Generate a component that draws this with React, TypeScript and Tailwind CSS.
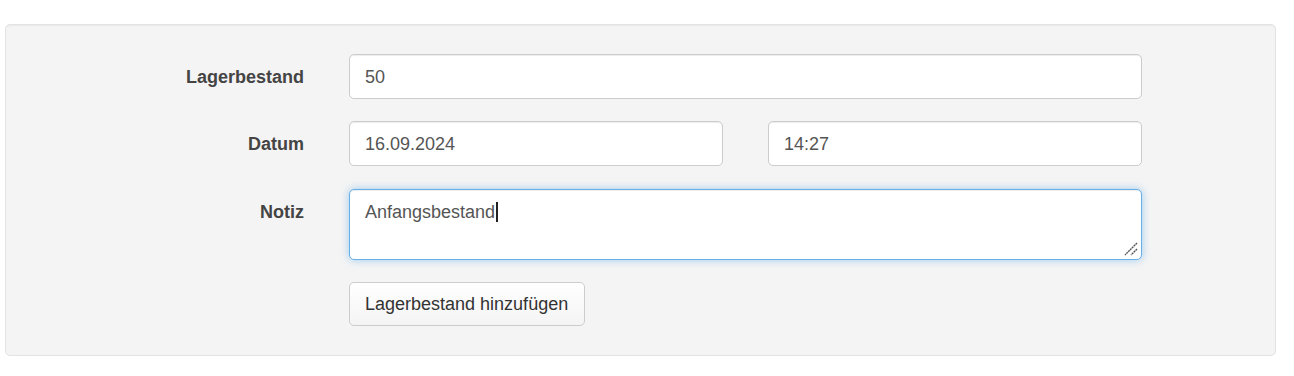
import React from 'react'

const font = { fontFamily: '"Liberation Sans", Arial, sans-serif' }

function Label({ children }: { children: React.ReactNode }) {
  return (
    <label className="w-[298px] shrink-0 text-right pt-[11px] text-[18px] leading-6 font-bold text-[#444]">
      {children}
    </label>
  )
}

function Input({ value, className = '' }: { value: string; className?: string }) {
  return (
    <div
      className={`h-[45px] rounded-[5px] border border-[#ccc] bg-white px-[15px] py-[10px] text-[18px] leading-6 text-[#555] shadow-[inset_0_1px_1px_rgba(0,0,0,0.075)] ${className}`}
    >
      {value}
    </div>
  )
}

export default function App() {
  return (
    <div className="min-h-[376px] bg-white pt-[24px]" style={font}>
      <div className="ml-[5px] w-[1271px] rounded-[5px] border border-[#e3e3e3] bg-[#f4f4f4] pt-[29px] pb-[29px] shadow-[inset_0_1px_1px_rgba(0,0,0,0.05)]">
        {/* Lagerbestand */}
        <div className="flex items-start">
          <Label>Lagerbestand</Label>
          <div className="ml-[45px] w-[793px]">
            <Input value="50" />
          </div>
        </div>

        {/* Datum */}
        <div className="mt-[22px] flex items-start">
          <Label>Datum</Label>
          <div className="ml-[45px] grid w-[793px] grid-cols-2 gap-[45px]">
            <Input value="16.09.2024" />
            <Input value="14:27" />
          </div>
        </div>

        {/* Notiz */}
        <div className="mt-[23px] flex items-start">
          <Label>Notiz</Label>
          <div className="relative ml-[45px] h-[71px] w-[793px] rounded-[5px] border border-[#66afe9] bg-white px-[15px] py-[10px] text-[18px] leading-6 text-[#555] shadow-[inset_0_1px_1px_rgba(0,0,0,0.075),0_0_8px_rgba(102,175,233,0.6)]">
            Anfangsbestand
            <span className="ml-[1px] inline-block h-[20px] w-[2px] align-[-4px] bg-[#222]"></span>
            <svg className="absolute right-[3px] bottom-[3px]" width="14" height="14" viewBox="0 0 14 14">
              <path d="M13 1 L1 13" stroke="#555" strokeWidth="1.4" strokeDasharray="2 0.6" />
              <path d="M13 7 L7 13" stroke="#555" strokeWidth="1.4" strokeDasharray="2 0.6" />
            </svg>
          </div>
        </div>

        {/* Button */}
        <div className="mt-[22px] flex">
          <div className="w-[298px] shrink-0"></div>
          <button className="ml-[45px] h-[44px] rounded-[5px] border border-[#ccc] bg-[linear-gradient(to_bottom,#ffffff,#f4f4f4)] pl-[15px] pr-[16px] text-[18px] leading-6 text-[#333]">
            Lagerbestand hinzufügen
          </button>
        </div>
      </div>
    </div>
  )
}
